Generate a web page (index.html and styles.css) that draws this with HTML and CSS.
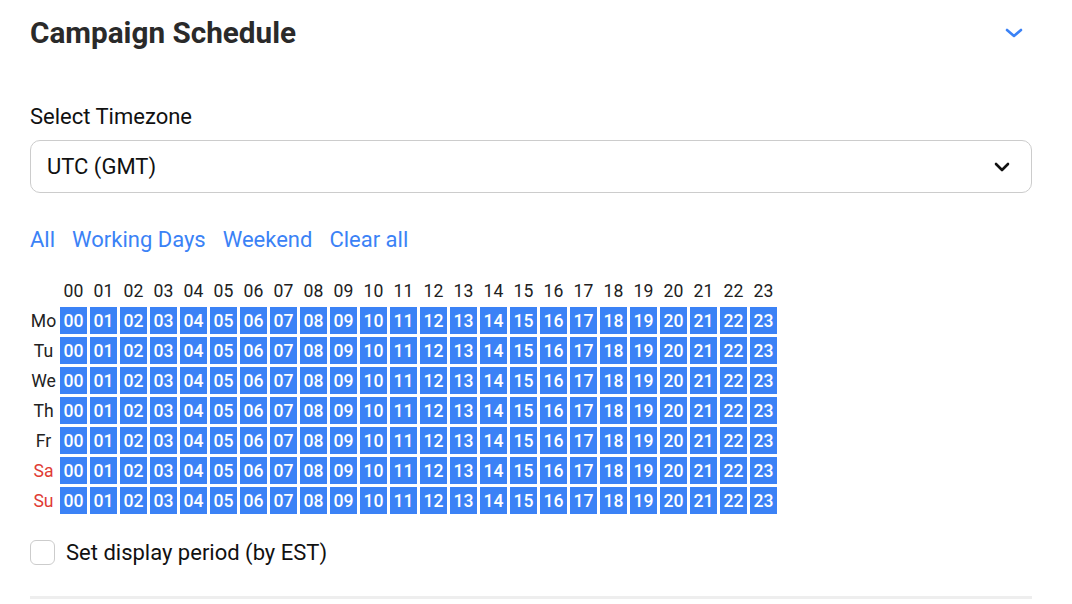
FILE: index.html
```html
<!DOCTYPE html>
<html lang="en">
<head>
    <meta charset="UTF-8">
    <meta name="viewport" content="width=device-width, initial-scale=1.0">
    <title>Campaign Schedule</title>
    <link rel="stylesheet" href="styles.css">
</head>
<body>
    <div class="schedule-container">
        <div class="schedule-header">
            <h2>Campaign Schedule</h2>
            <svg class="collapse-icon" width="18" height="10" viewBox="0 0 18 10">
                <path d="M2 2 L9 8 L16 2" fill="none" stroke="#3b82f6" stroke-width="2.6" stroke-linecap="round" stroke-linejoin="round"/>
            </svg>
        </div>

        <div class="field-label">Select Timezone</div>
        <div class="select-box">
            <span>UTC (GMT)</span>
            <svg width="16" height="10" viewBox="0 0 16 10">
                <path d="M2 2 L8 8 L14 2" fill="none" stroke="#111" stroke-width="2.6" stroke-linecap="round" stroke-linejoin="round"/>
            </svg>
        </div>

        <div class="quick-links">
            <a href="#">All</a>
            <a href="#">Working Days</a>
            <a href="#">Weekend</a>
            <a href="#">Clear all</a>
        </div>

        <div class="hour-grid" id="hourGrid"></div>

        <label class="period-check">
            <span class="check-box"></span>
            Set display period (by EST)
        </label>

        <div class="divider"></div>
    </div>

    <script>
        const grid = document.getElementById('hourGrid');
        const days = ['Mo', 'Tu', 'We', 'Th', 'Fr', 'Sa', 'Su'];

        function pad(n) {
            return n < 10 ? '0' + n : '' + n;
        }

        // header row
        grid.appendChild(document.createElement('div'));
        for (let h = 0; h < 24; h++) {
            const head = document.createElement('div');
            head.className = 'hour-head';
            head.textContent = pad(h);
            grid.appendChild(head);
        }

        days.forEach(day => {
            const label = document.createElement('div');
            label.className = 'day-label';
            if (day === 'Sa' || day === 'Su') label.classList.add('weekend');
            label.textContent = day;
            grid.appendChild(label);
            for (let h = 0; h < 24; h++) {
                const cell = document.createElement('div');
                cell.className = 'hour-cell';
                cell.textContent = pad(h);
                grid.appendChild(cell);
            }
        });
    </script>
</body>
</html>
```

FILE: styles.css
```css
body {
    margin: 0;
    padding: 0;
    font-family: Roboto, "Liberation Sans", Arial, sans-serif;
    background-color: #fff;
    color: #111;
}
.schedule-container {
    width: 1002px;
    padding: 0 30px;
}
.schedule-header {
    display: flex;
    justify-content: space-between;
    align-items: center;
    height: 66px;
}
.schedule-header h2 {
    margin: 0;
    font-size: 29.7px;
    line-height: 36px;
    font-weight: 700;
    color: #2a2a2a;
}
.collapse-icon {
    margin-right: 9px;
}
.field-label {
    margin-top: 38px;
    font-size: 22px;
    line-height: 26px;
}
.select-box {
    display: flex;
    justify-content: space-between;
    align-items: center;
    box-sizing: border-box;
    height: 53px;
    margin-top: 10px;
    padding: 0 21px 0 16px;
    border: 1.5px solid #ccc;
    border-radius: 10px;
    font-size: 22px;
}
.quick-links {
    display: flex;
    gap: 17px;
    margin-top: 35px;
    line-height: 24px;
}
.quick-links a {
    color: #3b82f6;
    font-size: 22px;
    text-decoration: none;
}
.hour-grid {
    display: grid;
    grid-template-columns: repeat(25, 27px);
    grid-auto-rows: 27px;
    gap: 3px;
    margin-top: 25px;
}
.hour-head, .day-label {
    display: flex;
    justify-content: center;
    align-items: center;
    font-size: 17.6px;
    color: #222;
}
.day-label.weekend {
    color: #e03b35;
}
.hour-cell {
    display: flex;
    justify-content: center;
    align-items: center;
    background-color: #3b82f6;
    color: #fff;
    font-size: 17.6px;
    font-weight: 500;
}
.period-check {
    display: flex;
    align-items: center;
    gap: 11px;
    height: 27px;
    margin-top: 25px;
    font-size: 22px;
    line-height: 27px;
}
.check-box {
    width: 23px;
    height: 23px;
    border: 1.5px solid #ccc;
    border-radius: 6px;
}
.divider {
    height: 3px;
    margin-top: 30px;
    background-color: #eee;
}
```
